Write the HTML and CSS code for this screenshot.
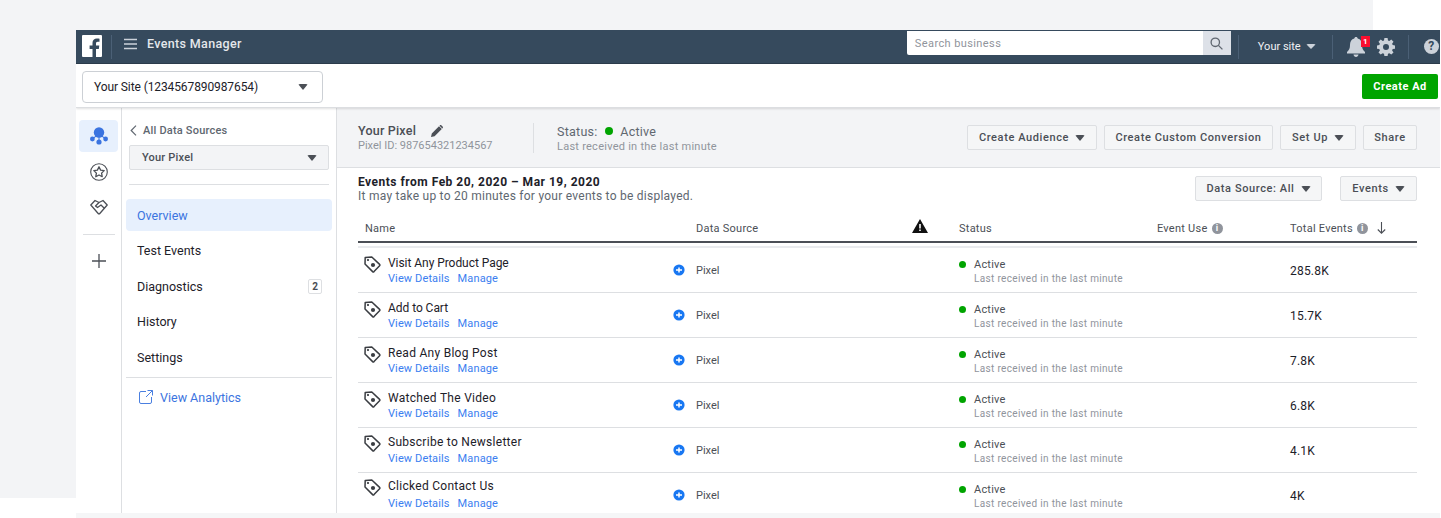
FILE: index.html
```html
<!DOCTYPE html>
<html lang="en">
<head>
  <meta charset="UTF-8">
  <title>Events Manager</title>
  <link rel="stylesheet" href="styles.css">
</head>
<body>
  <div class="backdrop"></div>

  <div class="app">
    <header class="topbar">
      <svg class="fb-logo" width="20" height="22" viewBox="0 0 20 22"><path fill="#fff" d="M1 0h18a1 1 0 0 1 1 1v20a1 1 0 0 1-1 1h-5v-8h2.8l.5-3.4H14V8.500c0-1 .4-1.700 1.800-1.700h1.700V3.800c-.5-.1-1.500-.2-2.600-.2-2.700 0-4.400 1.600-4.400 4.500v2.500H7.600V14h2.900v8H1a1 1 0 0 1-1-1V1a1 1 0 0 1 1-1z"/></svg>
      <span class="logo-sep"></span>
      <svg class="burger" width="13" height="12" viewBox="0 0 13 12"><path stroke="#ccd2da" stroke-width="1.600" d="M0 1.500h13M0 6h13M0 10.500h13"/></svg>
      <span class="app-name">Events Manager</span>
      <div class="search">
        <span class="search-input">Search business</span>
        <span class="search-btn">
          <svg width="13" height="13" viewBox="0 0 13 13" fill="none" stroke="#5f6670" stroke-width="1.300"><circle cx="5.300" cy="5.300" r="4.200"/><path d="M8.400 8.400l4 4"/></svg>
        </span>
      </div>
      <span class="top-sep sep-a"></span>
      <span class="site-menu">Your site <i class="caret caret-light"></i></span>
      <span class="top-sep sep-b"></span>
      <span class="bell">
        <svg width="18" height="20" viewBox="0 0 18 20"><path fill="#ccd2da" d="M9 0c1 0 1.600.6 1.700 1.500C13.600 2.300 15 4.600 15 8c0 3.500.8 5 3 7v1.500H0V15c2.200-2 3-3.500 3-7 0-3.400 1.400-5.700 4.300-6.500C7.400.6 8 0 9 0zM6.500 17.500h5C11.300 18.900 10.300 20 9 20s-2.300-1.100-2.500-2.500z"/></svg>
        <b class="badge">1</b>
      </span>
      <svg class="gear" width="18" height="18" viewBox="0 0 18 18"><path fill="#ccd2da" fill-rule="evenodd" d="M7.400 0h3.200l.4 2.400 1.300.6 2-1.400 2.200 2.200-1.400 2 .6 1.300 2.300.4v3.200l-2.300.4-.6 1.300 1.400 2-2.200 2.200-2-1.400-1.300.6-.4 2.200H7.400L7 15.800l-1.300-.6-2 1.400-2.200-2.200 1.400-2-.6-1.300L0 10.700V7.500l2.300-.4.6-1.300-1.400-2 2.200-2.200 2 1.400L7 2.400zM9 6a3 3 0 1 0 0 6 3 3 0 0 0 0-6z"/></svg>
      <span class="top-sep sep-c"></span>
      <span class="help">?</span>
    </header>

    <div class="subbar">
      <div class="account-select">
        <span>Your Site (1234567890987654)</span>
        <i class="caret caret-big"></i>
      </div>
      <span class="btn-green">Create Ad</span>
    </div>

    <div class="layout">
      <aside class="rail">
        <span class="rail-item rail-active">
          <svg width="18" height="18" viewBox="0 0 18 18" fill="#3b74e0"><circle cx="9" cy="5.500" r="5.200"/><circle cx="2.400" cy="12" r="2.400"/><circle cx="15.600" cy="12" r="2.400"/><circle cx="9" cy="15" r="2.600"/><path d="M8.500 9h1v4h-1zM3.500 10.500l2.500-2 .6.700-2.500 2zM14.500 10.500l-2.500-2-.6.700 2.500 2z"/></svg>
        </span>
        <span class="rail-item">
          <svg width="18" height="18" viewBox="0 0 18 18" fill="none" stroke="#4b4f56" stroke-width="1.100"><circle cx="9" cy="9" r="8.300"/><path stroke-linejoin="round" stroke-width="1.300" d="M9 3.800l1.600 3.300 3.600.5-2.600 2.500.6 3.600L9 12l-3.200 1.700.6-3.600-2.600-2.500 3.600-.5z"/></svg>
        </span>
        <span class="rail-item">
          <svg width="18" height="16" viewBox="0 0 18 16" fill="none" stroke="#4b4f56" stroke-width="1.300" stroke-linejoin="round"><path d="M.8 6L5 1.500l4 2 4-2L17.200 6l-7.400 8.500a1 1 0 0 1-1.600 0z"/><path d="M9 3.500L5.500 7l2 1.500L11 6l3.500 3.500"/></svg>
        </span>
        <span class="rail-sep"></span>
        <span class="rail-plus">
          <svg width="14" height="14" viewBox="0 0 14 14"><path stroke="#4b4f56" stroke-width="1.300" d="M7 0v14M0 7h14"/></svg>
        </span>
      </aside>

      <nav class="sidenav">
        <div class="back-link">
          <svg width="7" height="11" viewBox="0 0 7 11" fill="none" stroke="#606770" stroke-width="1.200"><path d="M6 .7L1.200 5.500 6 10.300"/></svg>
          All Data Sources
        </div>
        <div class="pixel-select">
          <span>Your Pixel</span>
          <i class="caret caret-dark"></i>
        </div>
        <div class="nav-sep"></div>
        <a class="nav-link nav-current">Overview</a>
        <a class="nav-link">Test Events</a>
        <a class="nav-link">Diagnostics <span class="count">2</span></a>
        <a class="nav-link">History</a>
        <a class="nav-link">Settings</a>
        <div class="nav-sep nav-sep-low"></div>
        <a class="analytics">
          <svg width="14" height="14" viewBox="0 0 14 14" fill="none" stroke="#4a7fe0" stroke-width="1"><path d="M7 1.500H2a1.500 1.500 0 0 0-1.500 1.500v9A1.500 1.500 0 0 0 2 13.500h9a1.500 1.500 0 0 0 1.500-1.500V7M8.500.5h5v5M13.500.5L7 7"/></svg>
          View Analytics
        </a>
      </nav>

      <main class="content">
        <section class="pixel-head">
          <div class="pixel-info">
            <div class="pixel-name">Your Pixel
              <svg width="12" height="12" viewBox="0 0 12 12" fill="#4b4f56"><path d="M0 12l.8-3.600L8 1.200 10.800 4 3.600 11.200zM8.800.4C9.300-.1 10-.1 10.500.4l1.100 1.100c.5.5.5 1.200 0 1.700l-.3.300-2.800-2.800z"/></svg>
            </div>
            <div class="pixel-id">Pixel ID: 987654321234567</div>
          </div>
          <div class="pixel-status">
            <div class="status-line">Status: <i class="dot"></i> Active</div>
            <div class="last-seen">Last received in the last minute</div>
          </div>
          <div class="head-actions">
            <span class="btn btn-audience">Create Audience <i class="caret caret-dark"></i></span>
            <span class="btn btn-custom">Create Custom Conversion</span>
            <span class="btn btn-setup">Set Up <i class="caret caret-dark"></i></span>
            <span class="btn btn-share">Share</span>
          </div>
        </section>

        <section class="events">
          <div class="events-head">
            <div>
              <h1>Events from Feb 20, 2020 – Mar 19, 2020</h1>
              <p>It may take up to 20 minutes for your events to be displayed.</p>
            </div>
            <div class="events-filters">
              <span class="btn btn-source">Data Source: All <i class="caret caret-dark"></i></span>
              <span class="btn btn-events">Events <i class="caret caret-dark"></i></span>
            </div>
          </div>

          <div class="grid grid-head">
            <span class="col-name">Name</span>
            <span>Data Source</span>
            <svg class="warn" width="16" height="14" viewBox="0 0 16 14"><path fill="#111" fill-rule="evenodd" d="M8 0l8 14H0zM7.200 5v4.500h1.600V5zm0 5.500V12h1.600v-1.500z"/></svg>
            <span>Status</span>
            <span class="with-info">Event Use <i class="info">i</i></span>
            <span class="with-info">Total Events <i class="info">i</i>
              <svg class="sort" width="9" height="12" viewBox="0 0 9 12" fill="none" stroke="#4b4f56" stroke-width="1.100"><path d="M4.500 0v11M.8 7.500l3.700 3.700 3.700-3.700"/></svg>
            </span>
          </div>

          <div class="rows" id="rows"></div>
        </section>
      </main>
    </div>
  </div>

  <script src="rows.js"></script>
</body>
</html>
```

FILE: styles.css
```css
* {
  box-sizing: border-box;
}

html, body {
  margin: 0;
  height: 518px;
  overflow: hidden;
  background: #fff;
}

body {
  font-family: Roboto, "Liberation Sans", sans-serif;
  font-size: 12px;
  color: #1d2129;
  padding: 30px 1px 0 76px;
  position: relative;
}

.backdrop {
  position: absolute;
  left: 0;
  top: 0;
  width: 1373px;
  height: 498px;
  background: #f3f4f6;
}

.app {
  position: relative;
  height: 488px;
  background: #fff;
  border-bottom: 5px solid #f5f6f7;
  overflow: hidden;
}

.caret {
  display: inline-block;
  width: 0;
  height: 0;
  border-left: 5px solid transparent;
  border-right: 5px solid transparent;
  border-top: 6px solid #4b4f56;
  border-radius: 2px;
}

.caret-light {
  border-top-color: #ccd2da;
  border-top-width: 5px;
  margin-left: 3px;
  vertical-align: 1px;
}

/* top bar */
.topbar {
  height: 34px;
  background: #364a5d;
  border-bottom: 1px solid #2c3c4c;
  display: flex;
  align-items: center;
  padding-left: 6px;
  color: #fff;
}

.fb-logo {
  margin-top: -2px;
}

.logo-sep {
  width: 1px;
  height: 24px;
  margin-left: 9px;
  background: #4b6076;
}

.burger {
  margin-left: 12px;
  margin-top: -5px;
}

.app-name {
  margin-left: 10px;
  margin-top: -6px;
  font-size: 12.500px;
  font-weight: 500;
  color: #e4e7eb;
  letter-spacing: .35px;
}

.search {
  margin-left: 665px;
  margin-top: -7px;
  width: 324px;
  height: 24px;
  display: flex;
  background: #fff;
  border-radius: 0 0 2px 2px;
}

.search-input {
  flex: 1;
  padding: 6px 8px;
  font-size: 11px;
  color: #90949c;
  letter-spacing: .4px;
}

.search-btn {
  width: 28px;
  background: #dde1e8;
  display: flex;
  align-items: center;
  justify-content: center;
}

.top-sep {
  width: 1px;
  height: 24px;
  background: #4b6076;
}

.sep-a {
  margin-left: 7px;
}

.site-menu {
  margin-left: 19px;
  margin-top: -1px;
  width: 74px;
  font-size: 11px;
  color: #f1f2f4;
}

.bell {
  position: relative;
  margin-left: 14px;
  height: 20px;
}

.badge {
  position: absolute;
  left: 14px;
  top: -1px;
  width: 9px;
  height: 11px;
  background: #fa0f30;
  color: #fff;
  font-size: 8px;
  line-height: 11px;
  text-align: center;
}

.gear {
  margin-left: 12px;
}

.sep-c {
  margin-left: 13px;
}

.help {
  margin-left: 15px;
  width: 15px;
  height: 15px;
  border-radius: 50%;
  background: #ccd2da;
  color: #364a5d;
  font-size: 12px;
  font-weight: 700;
  line-height: 15px;
  text-align: center;
}

/* account bar */
.subbar {
  height: 44px;
  display: flex;
  align-items: center;
  justify-content: space-between;
  padding: 2px 2px 0 6px;
  background: #fff;
  border-bottom: 1px solid #dcdee1;
  box-shadow: 0 1px 2px rgba(0, 0, 0, .12);
  position: relative;
}

.account-select {
  width: 241px;
  height: 32px;
  display: flex;
  align-items: center;
  justify-content: space-between;
  padding: 0 14px 0 11px;
  border: 1px solid #ccd0d5;
  border-radius: 4px;
  letter-spacing: -.1px;
}

.btn-green {
  width: 76px;
  height: 25px;
  margin-top: -1px;
  background: #00a400;
  color: #fff;
  font-size: 11px;
  font-weight: 700;
  line-height: 25px;
  text-align: center;
  letter-spacing: .5px;
  border-radius: 2px;
}

/* columns */
.layout {
  display: flex;
  height: 405px;
}

.rail {
  width: 46px;
  flex: none;
  display: flex;
  flex-direction: column;
  align-items: center;
  padding-top: 12px;
  border-right: 1px solid #dddfe2;
}

.rail-item {
  width: 39px;
  height: 32px;
  margin-bottom: 3.500px;
  display: flex;
  align-items: center;
  justify-content: center;
  border-radius: 4px;
}

.rail-active {
  background: #e7f0fd;
}

.rail-sep {
  width: 32px;
  height: 1px;
  margin-top: 7px;
  background: #dddfe2;
}

.rail-plus {
  margin-top: 19px;
  display: flex;
}

.sidenav {
  width: 215px;
  flex: none;
  padding: 15px 4px 0 4px;
  border-right: 1px solid #dddfe2;
}

.back-link {
  margin-left: 4px;
  display: flex;
  align-items: center;
  gap: 6px;
  height: 14px;
  font-size: 11px;
  font-weight: 500;
  color: #606770;
  letter-spacing: .2px;
}

.pixel-select {
  margin: 8px 3px 14px 3px;
  height: 25px;
  display: flex;
  align-items: center;
  justify-content: space-between;
  padding: 0 11px 0 12px;
  background: #f3f4f6;
  border: 1px solid #dddfe2;
  border-radius: 2px;
  font-size: 11px;
  font-weight: 500;
  color: #4b4f56;
  letter-spacing: .2px;
}

.nav-sep {
  height: 1px;
  margin: 0 3px 14px 3px;
  background: #dddfe2;
}

.nav-link {
  display: flex;
  align-items: center;
  justify-content: space-between;
  height: 32px;
  margin-bottom: 3.600px;
  padding: 0 10px 0 11px;
  font-size: 12.500px;
  color: #1d2129;
  border-radius: 4px;
}

.nav-current {
  background: #e7f0fd;
  color: #3b74e0;
}

.count {
  width: 14px;
  height: 15px;
  border: 1px solid #dddfe2;
  border-radius: 2px;
  font-size: 10px;
  font-weight: 700;
  line-height: 13px;
  text-align: center;
  color: #4b4f56;
}

.nav-sep-low {
  margin: 2px 0 12px 0;
}

.analytics {
  display: flex;
  align-items: center;
  gap: 7px;
  padding-left: 13px;
  font-size: 12.500px;
  color: #3b74e0;
}

/* main */
.content {
  flex: 1;
  min-width: 0;
}

.pixel-head {
  height: 60px;
  padding: 1px 23px 0 21px;
  display: flex;
  align-items: center;
  background: #f3f4f6;
  border-bottom: 1px solid #dddfe2;
}

.pixel-info {
  width: 176px;
  height: 30px;
  border-right: 1px solid #dddfe2;
}

.pixel-name {
  display: flex;
  align-items: center;
  gap: 15px;
  font-size: 12.500px;
  font-weight: 500;
  color: #4b4f56;
  height: 15px;
  letter-spacing: .2px;
}

.pixel-id {
  margin-top: 1px;
  font-size: 11px;
  color: #90949c;
}

.pixel-status {
  margin-left: 23px;
}

.last-seen {
  margin-top: 1px;
  font-size: 11px;
  color: #90949c;
  letter-spacing: .25px;
}

.status-line {
  display: flex;
  align-items: center;
  height: 15px;
  font-size: 12.500px;
  color: #606770;
  letter-spacing: .25px;
  white-space: pre;
}

.dot {
  width: 8px;
  height: 8px;
  flex: none;
  border-radius: 50%;
  background: #00a400;
}

.status-line .dot {
  margin: 0 4px;
}

.head-actions {
  margin-left: auto;
  margin-top: -1px;
  display: flex;
  gap: 7px;
}

.btn {
  height: 25px;
  display: flex;
  align-items: center;
  justify-content: center;
  gap: 6px;
  background: #f5f6f7;
  border: 1px solid #dddfe2;
  border-radius: 2px;
  font-size: 11px;
  font-weight: 500;
  color: #4b4f56;
  letter-spacing: .6px;
  white-space: nowrap;
}

.btn-audience { width: 130px; }
.btn-custom { width: 169px; }
.btn-setup { width: 76px; }
.btn-share { width: 54px; }
.btn-source { width: 127px; }
.btn-events { width: 77px; }

.events {
  padding: 7px 23px 0 21px;
}

.events-head {
  display: flex;
  justify-content: space-between;
  height: 44px;
}

.events-head h1 {
  margin: 0;
  font-size: 12px;
  font-weight: 700;
  line-height: 14px;
  letter-spacing: .5px;
  color: #1d2129;
}

.events-head p {
  margin: 0;
  font-size: 12px;
  line-height: 15px;
  color: #606770;
  letter-spacing: .25px;
}

.events-filters {
  display: flex;
  gap: 18px;
  margin-top: 1px;
}

.grid {
  display: grid;
  grid-template-columns: 315px 23px 216px 47px 198px 133px 127px;
  align-items: center;
}

.grid-head {
  height: 24px;
  padding-bottom: 4px;
  grid-template-columns: 338px 216px 47px 198px 133px 127px;
  border-bottom: 2px solid #4b4f56;
  font-size: 11px;
  color: #4b4f56;
  letter-spacing: .25px;
}

.warn {
  margin-top: -4px;
}

.col-name {
  padding-left: 7px;
}

.with-info {
  display: flex;
  align-items: center;
  gap: 4px;
  white-space: nowrap;
}

.info {
  width: 11px;
  height: 11px;
  border-radius: 50%;
  background: #90949c;
  color: #fff;
  font-size: 9px;
  font-style: normal;
  font-weight: 700;
  line-height: 11px;
  text-align: center;
}

.sort {
  margin-left: 5px;
}

.rows {
  margin-top: 3px;
  border-top: 2px solid #e9ebee;
}

.row {
  height: 45px;
  border-bottom: 1px solid #dddfe2;
  font-size: 11px;
  color: #4b4f56;
}

.event-cell {
  align-self: start;
  display: flex;
  gap: 7px;
  padding: 8px 0 0 6px;
}

.tag {
  flex: none;
}

.event-name {
  height: 15px;
  font-size: 12px;
  line-height: 15px;
  color: #1d2129;
  letter-spacing: .28px;
  white-space: nowrap;
}

/* the first two names are set a little tighter */
.tight .event-name {
  letter-spacing: -.05px;
}

/* the last rows sit higher in the cell */
.lift-1 .event-name {
  margin: -1px 0 1px;
}

.lift-1 .tag {
  margin-top: -1px;
}

.lift-2 .event-name {
  margin: -2px 0 2px;
}

.lift-2 .tag {
  margin-top: -2px;
}

.event-links {
  display: flex;
  gap: 8px;
  font-size: 11px;
  line-height: 15px;
  color: #3b7ef0;
  letter-spacing: .12px;
}

.plus-badge {
  display: flex;
}

.status-cell {
  display: flex;
  gap: 8px;
  align-self: start;
  padding-top: 10px;
}

.status-cell .dot {
  width: 7px;
  height: 7px;
  margin-top: 3px;
}

.status-cell small {
  display: block;
  font-size: 10px;
  line-height: 13px;
  color: #90949c;
  letter-spacing: .34px;
}

.status-cell span {
  display: block;
  line-height: 14px;
  letter-spacing: .2px;
}

.total {
  margin-top: 2px;
  font-size: 12px;
  color: #1d2129;
  letter-spacing: .2px;
}
```

FILE: rows.js
```js
const events = [
  ["Visit Any Product Page", "285.8K", "tight"],
  ["Add to Cart", "15.7K", "tight"],
  ["Read Any Blog Post", "7.8K", ""],
  ["Watched The Video", "6.8K", ""],
  ["Subscribe to Newsletter", "4.1K", "lift-1"],
  ["Clicked Contact Us", "4K", "lift-2"]
];

const tagIcon = `<svg class="tag" width="17" height="17" viewBox="0 0 17 17" fill="none" stroke="#3a3d42" stroke-width="1.500" stroke-linejoin="round"><path d="M1.200 1.500l6.600-.5 7.800 7.400a1 1 0 0 1 0 1.400l-5.600 5.800a1 1 0 0 1-1.400 0L1 8z"/><circle cx="4" cy="4" r=".7" fill="#3a3d42" stroke-width="1"/><circle cx="9" cy="9" r="2.100" fill="#3a3d42" stroke="none"/></svg>`;

const plusIcon = `<svg class="plus-badge" width="12" height="12" viewBox="0 0 12 12"><circle cx="6" cy="6" r="5.600" fill="#1877f2"/><path stroke="#fff" stroke-width="1.500" d="M3 6h6M6 3.500v5"/></svg>`;

document.getElementById("rows").innerHTML = events.map(e => `
  <div class="grid row ${e[2]}">
    <div class="event-cell">${tagIcon}<div>
      <div class="event-name">${e[0]}</div>
      <div class="event-links"><span>View Details</span><span>Manage</span></div>
    </div></div>
    ${plusIcon}
    <span>Pixel</span>
    <span></span>
    <div class="status-cell"><i class="dot"></i><div><span>Active</span><small>Last received in the last minute</small></div></div>
    <span></span>
    <span class="total">${e[1]}</span>
  </div>`).join("");
```
